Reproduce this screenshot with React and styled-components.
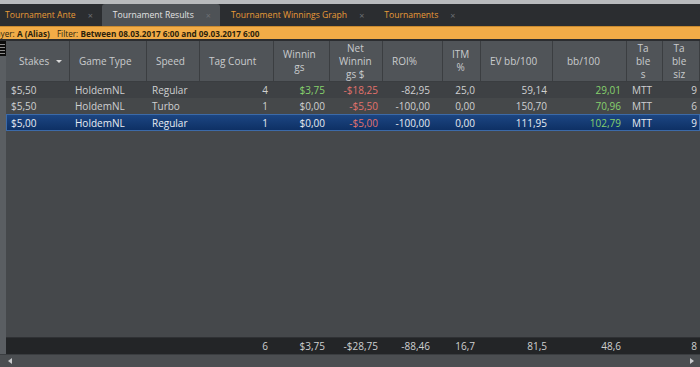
import React from "react";
import styled, { createGlobalStyle } from "styled-components";

const GlobalStyle = createGlobalStyle`
	html, body {
		margin: 0;
		padding: 0;
		background: #45484b;
	}
	body {
		font-family: "Open Sans", "Noto Sans", sans-serif;
	}
`;

const COLS = "64px 77px 53px 74px 56px 53px 60px 38px 72px 74px 36px 37px";

const Page = styled.div`
	width: 700px;
	height: 367px;
	display: flex;
	flex-direction: column;
	overflow: hidden;
	background: #45484b;
`;

const TopStrip = styled.div`
	height: 4px;
	background: #b9bbbd;
`;

const TabBar = styled.div`
	height: 22px;
	display: flex;
	align-items: stretch;
	background: #2b2d30;
	border-bottom: 1px solid #c98a30;
`;

const Tab = styled.div`
	display: flex;
	align-items: center;
	gap: 12px;
	padding: 0 9px 0 ${(p) => p.$left || 11}px;
	font-size: 8.6px;
	color: ${(p) => (p.$active ? "#e4e4e4" : "#e99b37")};
	background: ${(p) => (p.$active ? "#4e5256" : "transparent")};
	border-radius: 3px 3px 0 0;
	white-space: nowrap;
`;

const Close = styled.span`
	color: #6d7074;
	font-size: 9px;
`;

const FilterBar = styled.div`
	height: 12px;
	display: flex;
	align-items: center;
	gap: 7px;
	background: #f2ac47;
	color: #2a1f0c;
	font-size: 8.2px;
	white-space: nowrap;
	overflow: hidden;
`;

const FilterGroup = styled.span`
	margin-left: ${(p) => p.$shift || 0}px;
`;

const FilterPart = styled.span`
	font-weight: ${(p) => (p.$bold ? 700 : 400)};
`;

const Divider = styled.div`
	height: 2px;
	background: #2b2d30;
`;

const Body = styled.div`
	flex: 1;
	display: flex;
	min-height: 0;
`;

const Gutter = styled.div`
	width: 6px;
	background: #5a5e62;
	display: flex;
	flex-direction: column;
`;

const Table = styled.div`
	flex: 1;
	display: flex;
	flex-direction: column;
	min-width: 0;
`;

const Row = styled.div`
	display: grid;
	grid-template-columns: ${COLS};
	height: ${(p) => p.$h || 16}px;
	align-items: center;
	font-size: 10px;
	color: ${(p) => (p.$selected ? "#e8ecf2" : "#cfd0d1")};
	background: ${(p) =>
		p.$selected
			? "linear-gradient(#1d4784, #0d2f63)"
			: p.$alt
			? "#45484a"
			: "#3e4144"};
	box-shadow: ${(p) => (p.$selected ? "inset 0 0 0 1px #3c6aa8" : "none")};
`;

const HeaderRow = styled.div`
	display: grid;
	grid-template-columns: ${COLS};
	height: 40px;
	background: #505458;
	border-bottom: 1px solid #3a3d40;
	font-size: 10px;
	color: #c9cbcd;
`;

const HeaderCell = styled.div`
	display: flex;
	align-items: center;
	justify-content: ${(p) => (p.$spread ? "space-between" : "flex-start")};
	padding: 0 7px 0 ${(p) => p.$pl || 9}px;
	border-right: 1px solid #3b3e41;
	line-height: 13px;
	text-align: center;
	overflow: hidden;
`;

const Cell = styled.div`
	padding: 0 ${(p) => p.$pr || 6}px 0 5px;
	text-align: ${(p) => (p.$right ? "right" : "left")};
	color: ${(p) =>
		p.$tone === "pos" ? "#86d16d" : p.$tone === "neg" ? "#e3726c" : "inherit"};
	white-space: nowrap;
	overflow: hidden;
`;

const Filler = styled.div`
	flex: 1;
	border-bottom: 1px solid #2f3134;
`;

const Footer = styled(Row)`
	background: #232527;
	color: #cfd0d1;
	height: 16px;
`;

const Scrollbar = styled.div`
	height: 12px;
	display: flex;
	align-items: center;
	justify-content: space-between;
	padding: 0 6px 0 8px;
	background: #4b4e51;
	border-top: 1px solid #3a3d40;
`;

const Caret = styled.span`
	width: 0;
	height: 0;
	border-top: 3px solid transparent;
	border-bottom: 3px solid transparent;
	${(p) =>
		p.$dir === "left"
			? "border-right: 4px solid #c9cbcd;"
			: "border-left: 4px solid #c9cbcd;"}
`;

const SortMark = styled.span`
	width: 0;
	height: 0;
	border-left: 3px solid transparent;
	border-right: 3px solid transparent;
	border-top: 3px solid #d8d8d8;
`;

const GridIcon = () => (
	<svg width="6" height="15" viewBox="0 0 6 15" style={{ display: "block" }}>
		<rect x="0" y="0" width="6" height="15" fill="#0c0c0c" />
		<rect x="0" y="3" width="5" height="1" fill="#8a8a8a" />
		<rect x="0" y="6" width="5" height="1" fill="#8a8a8a" />
		<rect x="0" y="9" width="5" height="1" fill="#8a8a8a" />
		<rect x="0" y="12" width="5" height="1" fill="#8a8a8a" />
	</svg>
);

const rows = [
	["$5,50", "HoldemNL", "Regular", "4", "$3,75", "-$18,25", "-82,95", "25,0", "59,14", "29,01", "MTT", "9"],
	["$5,50", "HoldemNL", "Turbo", "1", "$0,00", "-$5,50", "-100,00", "0,00", "150,70", "70,96", "MTT", "6"],
	["$5,00", "HoldemNL", "Regular", "1", "$0,00", "-$5,00", "-100,00", "0,00", "111,95", "102,79", "MTT", "9"],
];

const totals = ["", "", "", "6", "$3,75", "-$28,75", "-88,46", "16,7", "81,5", "48,6", "", "8"];

// alignment / padding per column
const colSpec = [
	{},
	{},
	{},
	{ right: true },
	{ right: true, pr: 5 },
	{ right: true, pr: 5 },
	{ right: true, pr: 13 },
	{ right: true, pr: 6 },
	{ right: true, pr: 6 },
	{ right: true, pr: 6 },
	{},
	{ right: true, pr: 3 },
];

function tone(i, v) {
	if (i === 4 && v !== "$0,00") return "pos";
	if (i === 5) return "neg";
	if (i === 9) return "pos";
	return null;
}

const headers = [
	"Game Type",
	"Speed",
	"Tag Count",
	<>Winnin<br />gs</>,
	<>Net<br />Winnin<br />gs $</>,
	"ROI%",
	<>ITM<br />%</>,
	"EV bb/100",
	"bb/100",
	<>Ta<br />ble<br />s</>,
	<>Ta<br />ble<br />siz</>,
];

export default function App() {
	return (
		<Page>
			<GlobalStyle />
			<TopStrip />
			<TabBar>
				<Tab $left={5}>
					Tournament Ante <Close>×</Close>
				</Tab>
				<Tab $active>
					Tournament Results <Close>×</Close>
				</Tab>
				<Tab>
					Tournament Winnings Graph <Close>×</Close>
				</Tab>
				<Tab>
					Tournaments <Close>×</Close>
				</Tab>
			</TabBar>
			<FilterBar>
				<FilterGroup $shift={-11}>
					<FilterPart>Player: </FilterPart>
					<FilterPart $bold>A (Alias)</FilterPart>
				</FilterGroup>
				<FilterGroup>
					<FilterPart>Filter: </FilterPart>
					<FilterPart $bold>Between 08.03.2017 6:00 and 09.03.2017 6:00</FilterPart>
				</FilterGroup>
			</FilterBar>
			<Divider />
			<Body>
				<Gutter>
					<GridIcon />
				</Gutter>
				<Table>
					<HeaderRow>
						<HeaderCell $spread $pl={13}>
							<span>Stakes</span>
							<SortMark />
						</HeaderCell>
						{headers.map((h, i) => (
							<HeaderCell key={i} $pl={i === 8 ? 14 : 9}>
								<span>{h}</span>
							</HeaderCell>
						))}
					</HeaderRow>
					{rows.map((r, ri) => (
						<Row key={ri} $alt={ri === 1} $selected={ri === 2} $h={ri === 2 ? 17 : 16}>
							{r.map((v, i) => (
								<Cell key={i} $right={colSpec[i].right} $pr={colSpec[i].pr} $tone={tone(i, v)}>
									{v}
								</Cell>
							))}
						</Row>
					))}
					<Filler />
					<Footer>
						{totals.map((v, i) => (
							<Cell key={i} $right={colSpec[i].right} $pr={colSpec[i].pr}>
								{v}
							</Cell>
						))}
					</Footer>
				</Table>
			</Body>
			<Scrollbar>
				<Caret $dir="left" />
				<Caret $dir="right" />
			</Scrollbar>
		</Page>
	);
}
